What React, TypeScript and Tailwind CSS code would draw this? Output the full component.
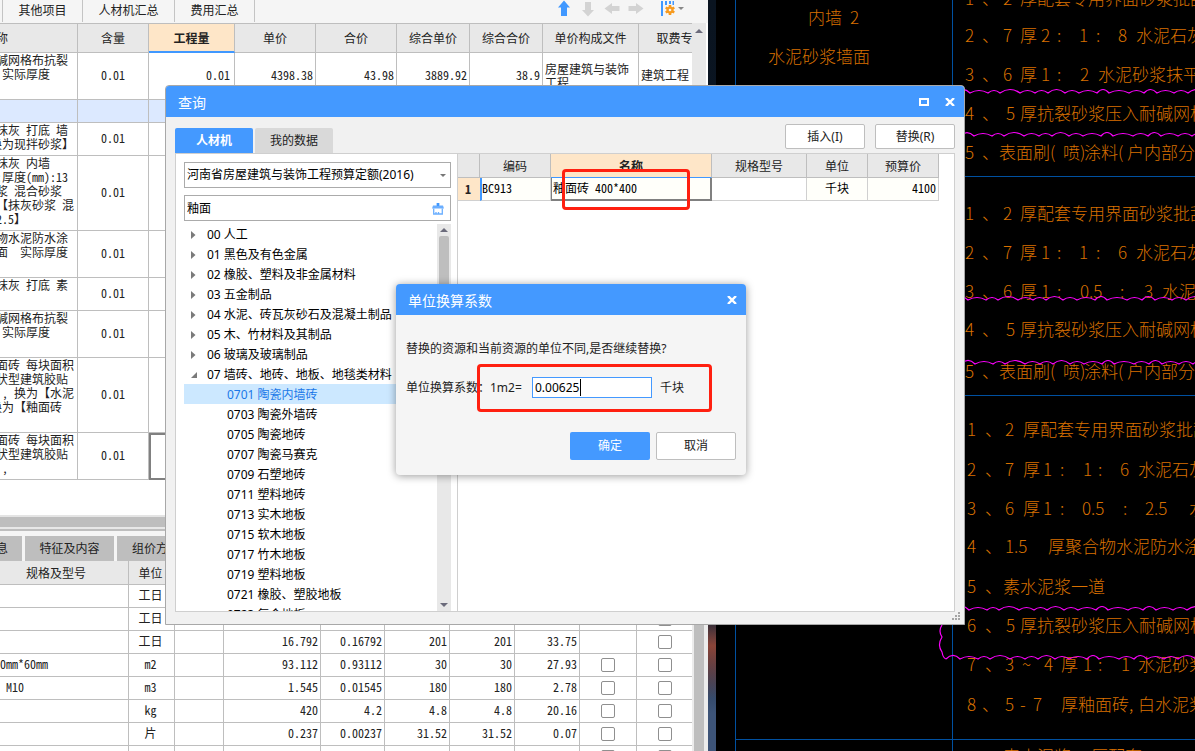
import React from "react";

const UI = "font-['Noto_Sans','Noto_Sans_CJK_SC',sans-serif]";
const GRID = "font-['Noto_Sans_CJK_SC',sans-serif] [font-feature-settings:'hwid']";

/* ---------- toolbar ---------- */

function Arrow({ dir, active, label }: { dir: "up" | "down" | "left" | "right"; active?: boolean; label: string }) {
  const paths = {
    up: "M8 0.5 L14 7.5 H11 V16 H5 V7.5 H2 Z",
    down: "M8 16.5 L14 10 H11 V2 H5 V10 H2 Z",
    left: "M0.5 8.5 L8 3 V6 H15.5 V11 H8 V14 Z",
    right: "M15.5 8.5 L8 3 V6 H0.5 V11 H8 V14 Z",
  };
  return (
    <button type="button" aria-label={label} className="h-[18px] w-4">
      <svg viewBox="0 0 16 18" className="h-[18px] w-4">
        <path d={paths[dir]} fill={active ? "#4098ff" : "#d3d3d3"} />
      </svg>
    </button>
  );
}

function Toolbar() {
  return (
    <div className="flex h-[23px] shrink-0 items-start bg-[#f5f5f5]">
      <nav className="ml-[2px] flex h-[22px] border-l border-[#c4c4c4]">
        <button type="button" className="w-20 border-r border-[#c4c4c4]">其他项目</button>
        <button type="button" className="w-[92px] border-r border-[#c4c4c4]">人材机汇总</button>
        <button type="button" className="w-20 border-r border-[#c4c4c4]">费用汇总</button>
      </nav>
      <div className="mr-6 ml-auto flex items-center gap-2">
        <Arrow dir="up" active label="上移" />
        <Arrow dir="down" label="下移" />
        <Arrow dir="left" label="升级" />
        <Arrow dir="right" label="降级" />
        <button type="button" aria-label="列设置" className="ml-2 h-[18px] w-6">
          <svg viewBox="0 0 24 18" className="h-[18px] w-6">
            <path d="M1 1h2v15H1z" fill="#4098ff" />
            <path d="M5 1h2v4H5zM9 1h2v3H9zM12.500 1h1.500v4h-1.500z" fill="#4098ff" />
            <g stroke="#f79a1e" strokeWidth="2.600">
              <path d="M10 5v10M5.700 7.500l8.600 5M14.300 7.500l-8.600 5" />
            </g>
            <circle cx="10" cy="10" r="3.600" fill="#f79a1e" />
            <circle cx="10" cy="10" r="1.300" fill="#f5f5f5" />
            <path d="M18 7h6l-3 3z" fill="#888" />
          </svg>
        </button>
      </div>
    </div>
  );
}

/* ---------- upper grid ---------- */

type TopRow = { h: string; lines: string[]; content?: string; tint?: boolean; first?: boolean; last?: boolean };

const topRows: TopRow[] = [
  { h: "h-[47px]", lines: [" 碱网格布抗裂", "  实际厚度"], content: "0.01", first: true },
  { h: "h-[23px]", lines: [], tint: true },
  { h: "h-[33px]", lines: [" 抹灰 打底 墙", "换为现拌砂浆】"], content: "0.01" },
  { h: "h-[75px]", lines: [" 抹灰 内墙", " :厚度(mm):13", " 浆 混合砂浆", " 【抹灰砂浆 混", " 2.5】"], content: "0.01" },
  { h: "h-[47px]", lines: [" 物水泥防水涂", " 面  实际厚度"], content: "0.01" },
  { h: "h-[33px]", lines: [" 抹灰 打底 素"], content: "0.01" },
  { h: "h-[47px]", lines: [" 碱网格布抗裂", "  实际厚度"], content: "0.01" },
  { h: "h-[75px]", lines: [" 面砖 每块面积", " 状型建筑胶贴", "  , 换为【水泥", "换为【釉面砖"], content: "0.01" },
  { h: "h-[47px]", lines: [" 面砖 每块面积", " 状型建筑胶贴", "  ,"], content: "0.01", last: true },
];

function ScrollUp() {
  return (
    <svg viewBox="0 0 8 4" className="h-1 w-2" aria-hidden="true">
      <path d="M0 4L4 0l4 4z" fill="#6b6b7b" />
    </svg>
  );
}

function TopGrid() {
  const cell = "border-r border-b border-[#bebebe]";
  const num = `${cell} pr-0.5 pb-0.5 text-right`;
  const head = "border-r border-b border-[#bebebe] bg-[#e8e8e8] font-normal";
  return (
    <div className={`flex shrink-0 bg-white pb-[35px] ${GRID}`}>
      <div className="w-[692px] overflow-hidden border-t border-[#bebebe]">
        <table className="w-[723px] table-fixed border-separate border-spacing-0">
          <colgroup>
            <col className="w-[78px]" />
            <col className="w-[71px]" />
            <col className="w-[86px]" />
            <col className="w-[81px]" />
            <col className="w-[81px]" />
            <col className="w-[73px]" />
            <col className="w-[73px]" />
            <col className="w-24" />
            <col className="w-[84px]" />
          </colgroup>
          <thead>
            <tr className="h-[29px]">
              <th className={`${head} text-left whitespace-pre`}><span className="-ml-2.5 block"> 称</span></th>
              <th className={head}>含量</th>
              <th className="border-r border-b-2 border-r-[#bebebe] border-b-[#4098ff] bg-[#fee6c8] font-bold">工程量</th>
              <th className={head}>单价</th>
              <th className={head}>合价</th>
              <th className={head}>综合单价</th>
              <th className={head}>综合合价</th>
              <th className={head}>单价构成文件</th>
              <th className={head}>取费专业</th>
            </tr>
          </thead>
          <tbody>
            {topRows.map((r, i) => (
              <tr key={i} className={`${r.h} ${r.tint ? "bg-[#dce9ff]" : ""}`}>
                <td className={`${cell} overflow-hidden align-top whitespace-pre`}>
                  {r.lines.map((l, k) => (
                    <span key={k} className="-ml-2.5 block leading-[14px]">{l}</span>
                  ))}
                </td>
                <td className={`${cell} pb-0.5 text-center`}>{r.content}</td>
                <td className={r.last ? "border-2 border-[#808080]" : `${cell} pr-1 pb-0.5 text-right`}>{r.first && "0.01"}</td>
                <td className={num}>{r.first && "4398.38"}</td>
                <td className={num}>{r.first && "43.98"}</td>
                <td className={num}>{r.first && "3889.92"}</td>
                <td className={num}>{r.first && "38.9"}</td>
                <td className={`${cell} px-0.5 leading-[14px]`}>{r.first && "房屋建筑与装饰工程"}</td>
                <td className={`${cell} px-0.5 pb-0.5`}>{r.first && "建筑工程"}</td>
              </tr>
            ))}
          </tbody>
        </table>
      </div>
      <div className="flex w-[14px] justify-center bg-[#e8e8e8] pt-1.5"><ScrollUp /></div>
    </div>
  );
}

/* ---------- lower grid ---------- */

const lowRows: { spec: string; unit: string; v: string[]; a: boolean; b: boolean }[] = [
  { spec: "", unit: "工日", v: ["", "", "", "", ""], a: false, b: true },
  { spec: "", unit: "工日", v: ["", "", "", "", ""], a: false, b: true },
  { spec: "", unit: "工日", v: ["16.792", "0.16792", "201", "201", "33.75"], a: false, b: true },
  { spec: "0mm*60mm", unit: "m2", v: ["93.112", "0.93112", "30", "30", "27.93"], a: true, b: true },
  { spec: " M10", unit: "m3", v: ["1.545", "0.01545", "180", "180", "2.78"], a: true, b: true },
  { spec: "", unit: "kg", v: ["420", "4.2", "4.8", "4.8", "20.16"], a: true, b: true },
  { spec: "", unit: "片", v: ["0.237", "0.00237", "31.52", "31.52", "0.07"], a: true, b: true },
  { spec: "", unit: "", v: ["", "", "", "", ""], a: true, b: true },
];

function Tick({ label }: { label: string }) {
  return (
    <input
      type="checkbox"
      aria-label={label}
      className="mx-auto block h-3.5 w-3.5 appearance-none rounded-xs border border-[#8f8f8f] bg-white"
    />
  );
}

function LowerPanel() {
  const line = "border-r border-b border-[#bebebe]";
  const cell = `${line} pb-0.5`;
  return (
    <div className="shrink-0 bg-white">
      <div className="h-0.5 bg-[#e4e4e4]" />
      <div className="h-2.5 bg-[#bebebe]" />
      <div className="h-0.5 bg-[#e8e8e8]" />
      <div className="h-0.5 bg-[#bebebe]" />
      <div className="flex h-[30px] gap-[3px] bg-[#f5f5f5] pt-[5px]">
        <button type="button" className="w-[22px] bg-[#bebebe] whitespace-nowrap"><span className="-ml-1 block w-2">息</span></button>
        <button type="button" className="w-[89px] bg-[#bebebe]">特征及内容</button>
        <button type="button" className="w-[78px] bg-[#bebebe]">组价方案</button>
      </div>
      <div className={`flex ${GRID}`}>
        <table className="w-[692px] table-fixed border-separate border-spacing-0">
          <colgroup>
            <col className="w-[129px]" />
            <col className="w-[46px]" />
            <col className="w-[49px]" />
            <col className="w-[97px]" />
            <col className="w-16" />
            <col className="w-[65px]" />
            <col className="w-[65px]" />
            <col className="w-[65px]" />
            <col className="w-[57px]" />
            <col />
          </colgroup>
          <thead>
            <tr className="h-6 bg-[#e8e8e8]">
              <th className={`${line} pr-4 font-normal`}>规格及型号</th>
              <th className={`${line} pr-0.5 font-normal`}>单位</th>
              {[0, 1, 2, 3, 4, 5, 6, 7].map((n) => (
                <th key={n} className={line} />
              ))}
            </tr>
          </thead>
          <tbody>
            {lowRows.map((r, i) => (
              <tr key={i} className="h-[23px]">
                <td className={`${cell} whitespace-pre`}>{r.spec}</td>
                <td className={`${cell} pr-0.5 text-center`}>{r.unit}</td>
                <td className={cell} />
                {r.v.map((v, k) => (
                  <td key={k} className={`${cell} pr-0.5 text-right`}>{v}</td>
                ))}
                <td className={line}>{r.a && <Tick label="是否暂估" />}</td>
                <td className="border-b border-[#bebebe]">{r.b && <Tick label="锁定单价" />}</td>
              </tr>
            ))}
          </tbody>
        </table>
        <div className="flex w-4 bg-[#ececec] pl-0.5">
          <div className="w-2.5 bg-[#bebebe]" />
        </div>
      </div>
    </div>
  );
}

/* ---------- CAD drawing ---------- */

type Piece = [number, string];
const cadLines: { y: number; p: Piece[] }[] = [
  { y: 18, p: [[92, "内墙"], [134, "2"]] },
  { y: 57, p: [[52, "水泥砂浆墙面"]] },
  { y: -1, p: [[249, "1"], [266, "、"], [287, "2"], [304, "厚配套专用界面砂浆批刮"]] },
  { y: 36, p: [[249, "2"], [266, "、"], [287, "7"], [304, "厚"], [325, "2"], [341, ":"], [363, "1"], [380, ":"], [402, "8"], [420, "水泥石灰"]] },
  { y: 75, p: [[249, "3"], [266, "、"], [287, "6"], [304, "厚"], [325, "1"], [341, ":"], [364, "2"], [382, "水泥砂浆抹平"]] },
  { y: 114, p: [[249, "4"], [266, "、"], [290, "5"], [304, "厚抗裂砂浆压入耐碱网格"]] },
  { y: 153, p: [[249, "5"], [266, "、"], [283, "表面刷("], [347, "喷)"], [368, "涂料("], [411, "户内部分"]] },
  { y: 214, p: [[249, "1"], [266, "、"], [287, "2"], [304, "厚配套专用界面砂浆批刮"]] },
  { y: 253, p: [[249, "2"], [266, "、"], [287, "7"], [304, "厚"], [325, "1"], [341, ":"], [363, "1"], [380, ":"], [402, "6"], [420, "水泥石灰"]] },
  { y: 292, p: [[249, "3"], [266, "、"], [287, "6"], [304, "厚"], [325, "1"], [341, ":"], [364, "0.5"], [404, ":"], [428, "3"], [446, "水泥石"]] },
  { y: 330, p: [[249, "4"], [266, "、"], [290, "5"], [304, "厚抗裂砂浆压入耐碱网格"]] },
  { y: 372, p: [[249, "5"], [266, "、"], [283, "表面刷("], [347, "喷)"], [368, "涂料("], [411, "户内部分"]] },
  { y: 430, p: [[251, "1"], [269, "、"], [289, "2"], [307, "厚配套专用界面砂浆批刮"]] },
  { y: 470, p: [[251, "2"], [269, "、"], [289, "7"], [307, "厚"], [327, "1"], [344, ":"], [367, "1"], [382, ":"], [404, "6"], [422, "水泥石灰"]] },
  { y: 509, p: [[251, "3"], [269, "、"], [289, "6"], [307, "厚"], [327, "1"], [344, ":"], [366, "0.5"], [407, ":"], [429, "2.5"], [473, "水"]] },
  { y: 547, p: [[251, "4"], [269, "、"], [289, "1.5"], [332, "厚聚合物水泥防水涂"]] },
  { y: 587, p: [[251, "5"], [269, "、"], [287, "素水泥浆一道"]] },
  { y: 626, p: [[251, "6"], [269, "、"], [290, "5"], [304, "厚抗裂砂浆压入耐碱网格"]] },
  { y: 665, p: [[251, "7"], [269, "、"], [289, "3"], [306, "~"], [328, "4"], [345, "厚"], [367, "1"], [382, ":"], [405, "1"], [422, "水泥砂浆"]] },
  { y: 705, p: [[251, "8"], [266, "、"], [289, "5"], [304, "-"], [317, "7"], [345, "厚釉面砖,"], [422, "白水泥浆"]] },
  { y: 757, p: [[287, "素水泥浆"], [375, "厚配套"]] },
];

function wave(x: number, y: number, end: number) {
  const widths = [14, 18, 12, 20, 15, 13, 17];
  let d = `M${x} ${y}`;
  for (let i = 0; x < end; i++) {
    const w = widths[i % widths.length];
    d += ` q${w / 2} ${i % 3 === 0 ? -7 : -5} ${w} 0`;
    x += w;
  }
  return d;
}

function CadView() {
  return (
    <svg className="min-w-0 flex-1 bg-black" role="img" aria-label="做法表">
      <g fill="#d87000" fontSize="17" className="font-['Noto_Sans_CJK_SC',sans-serif] font-light">
        {cadLines.map((l, i) => (
          <text key={i} y={l.y + 6}>
            {l.p.map(([x, t], k) => (
              <tspan key={k} x={x}>{t}</tspan>
            ))}
          </text>
        ))}
      </g>
      <g fill="none" stroke="#0050a0">
        <path d="M19.500 0V751M236.500 0V751" />
        <path d="M236 176.500H1600M236 395.500H1600M19 739.500H1600" />
      </g>
      <g fill="none" stroke="#ff00ff" strokeWidth="1.200">
        <path d={wave(240, 93, 1600)} />
        <path d={wave(244, 136, 1600)} />
        <path d={wave(238, 300, 1600)} />
        <path d={wave(245, 364, 1600)} />
        <path d={wave(239, 610, 1600)} />
        <path d={wave(230, 659, 1600)} />
        <path d="M226 625q-4 6 0 12q-5 8 0 15q1 6 4 7" />
      </g>
    </svg>
  );
}

/* ---------- query dialog ---------- */

const parents = [
  "00 人工",
  "01 黑色及有色金属",
  "02 橡胶、塑料及非金属材料",
  "03 五金制品",
  "04 水泥、砖瓦灰砂石及混凝土制品",
  "05 木、竹材料及其制品",
  "06 玻璃及玻璃制品",
];
const children = [
  "0701 陶瓷内墙砖",
  "0703 陶瓷外墙砖",
  "0705 陶瓷地砖",
  "0707 陶瓷马赛克",
  "0709 石塑地砖",
  "0711 塑料地砖",
  "0713 实木地板",
  "0715 软木地板",
  "0717 竹木地板",
  "0719 塑料地板",
  "0721 橡胶、塑胶地板",
  "0723 复合地板",
];

function CloseIcon() {
  return (
    <svg viewBox="0 0 10 8" className="h-2 w-2.5" aria-hidden="true">
      <path d="M1 0l8 8M9 0l-8 8" stroke="#fff" strokeWidth="2.400" />
    </svg>
  );
}

function Tree() {
  return (
    <div className="mt-[3px] flex min-h-0 flex-1 overflow-hidden">
      <ul className="min-w-0 flex-1 leading-5 whitespace-nowrap text-black">
        {parents.map((t) => (
          <li key={t} className="flex h-5 items-center pt-0.5 pl-[7px]">
            <svg viewBox="0 0 16 8" className="h-2 w-4 shrink-0" aria-hidden="true">
              <path d="M0 0l4.500 4L0 8z" fill="#7a7a7a" />
            </svg>
            {t}
          </li>
        ))}
        <li>
          <div className="flex h-5 items-center pt-0.5 pl-[7px]">
            <svg viewBox="0 0 16 8" className="h-2 w-4 shrink-0" aria-hidden="true">
              <path d="M6 1v6H0z" fill="#7a7a7a" />
            </svg>
            07 墙砖、地砖、地板、地毯类材料
          </div>
          <ul>
            {children.map((t, i) => (
              <li key={t} className={`h-5 pt-px pl-[43px] ${i === 0 ? "bg-[#cce8ff] text-[#1a78e8]" : ""}`}>{t}</li>
            ))}
          </ul>
        </li>
      </ul>
      <div className="flex w-3.5 shrink-0 flex-col items-center bg-[#e8e8e8] pt-1">
        <ScrollUp />
        <div className="mt-1 h-[120px] w-2.5 rounded-xs bg-[#bebebe]" />
        <svg viewBox="0 0 8 4" className="mt-auto mb-1 h-1 w-2" aria-hidden="true">
          <path d="M0 0h8L4 4z" fill="#6b6b7b" />
        </svg>
      </div>
    </div>
  );
}

function ResultTable() {
  const head = "border-r border-b border-[#bebebe] bg-[#e8e8e8] font-normal";
  const cell = "border-r border-b border-[#d0d0d0] pb-0.5";
  return (
    <table className={`w-[481px] table-fixed border-separate border-spacing-0 text-black ${GRID}`}>
      <colgroup>
        <col className="w-[22px]" />
        <col className="w-[71px]" />
        <col className="w-[161px]" />
        <col className="w-[95px]" />
        <col className="w-[61px]" />
        <col />
      </colgroup>
      <thead>
        <tr className="h-6 text-[#222]">
          <th className={head} />
          <th className={head}>编码</th>
          <th className="border-r border-b border-r-[#bebebe] border-b-[#4098ff] bg-[#fee6c8] font-bold">名称</th>
          <th className={head}>规格型号</th>
          <th className={head}>单位</th>
          <th className={head}>预算价</th>
        </tr>
      </thead>
      <tbody>
        <tr className="h-[23px] bg-[#fffffa]">
          <th className="border-b border-[#d0d0d0] bg-[#fee6c8] pr-0.5 text-[#222]">1</th>
          <td className={`${cell} border-l-2 border-l-[#4098ff]`}>BC913</td>
          <td className="border-r-2 border-b-2 border-l border-[#808080] pb-px pl-px">釉面砖 400*400</td>
          <td className={`${cell} bg-white`} />
          <td className={`${cell} text-center`}>千块</td>
          <td className={`${cell} pr-0.5 text-right`}>4100</td>
        </tr>
      </tbody>
    </table>
  );
}

function QueryDialog() {
  const btn = "h-[25px] w-20 rounded-xs border border-[#bebebe] bg-white";
  return (
    <section
      role="dialog"
      aria-label="查询"
      className="absolute top-[85px] left-[165px] flex h-[540px] w-[800px] flex-col overflow-hidden rounded-t-sm border border-[#a8a8a8] bg-[#f1f1f1]"
    >
      <header className="flex h-[31px] shrink-0 items-center bg-[#4499ff] pr-[9px] pl-3 text-sm text-white">
        <h1 className="pt-0.5">查询</h1>
        <button type="button" aria-label="最大化" className="ml-auto">
          <span className="block h-2 w-2.5 border-2 border-white" />
        </button>
        <button type="button" aria-label="关闭" className="ml-4"><CloseIcon /></button>
      </header>
      <div className="flex h-9 shrink-0 items-end gap-0.5 px-[9px]">
        <button type="button" className="h-[25px] w-[78px] rounded-t-xs bg-[#4499ff] font-bold text-white">人材机</button>
        <button type="button" className="h-[25px] w-[78px] rounded-t-xs bg-[#d9d9d9]">我的数据</button>
        <div className="mb-1 ml-auto flex gap-2.5">
          <button type="button" className={btn}>插入(I)</button>
          <button type="button" className={btn}>替换(R)</button>
        </div>
      </div>
      <div className="mx-[9px] mb-3 flex min-h-0 flex-1 border border-[#cfcfcf] bg-white">
        <div className="flex w-[282px] shrink-0 flex-col border-r border-[#cfcfcf] pt-2 pr-1.5 pl-2">
          <div className="flex h-[26px] shrink-0 items-center border border-[#ababab]">
            <select
              aria-label="定额库"
              className="h-6 min-w-0 flex-1 appearance-none bg-transparent pl-0.5 text-black outline-none"
              defaultValue="2016"
            >
              <option value="2016">河南省房屋建筑与装饰工程预算定额(2016)</option>
            </select>
            <svg viewBox="0 0 6 3" className="mr-1 h-[3px] w-1.5" aria-hidden="true">
              <path d="M0 0h6L3 3z" fill="#777" />
            </svg>
          </div>
          <div className="mt-[7px] flex h-[26px] shrink-0 items-center border border-[#ababab]">
            <input aria-label="搜索" className="h-6 min-w-0 flex-1 bg-transparent pl-0.5 text-black outline-none" defaultValue="釉面" />
            <button type="button" aria-label="清除" className="mr-1.5">
              <svg viewBox="0 0 12 13" className="h-[13px] w-3">
                <path d="M4.500 1h3v2.500H11l1 3H0l1-3h3.500z" fill="#6aaeff" />
                <path d="M1.700 6.500v5.500h8.600V6.500M4 12V10M6.500 12V10" fill="none" stroke="#6aaeff" strokeWidth="1.300" />
                <path d="M5 1h2v3H5z" fill="#4098ff" />
              </svg>
            </button>
          </div>
          <Tree />
        </div>
        <div className="min-w-0 flex-1 overflow-hidden">
          <ResultTable />
        </div>
      </div>
      <svg viewBox="0 0 8 8" className="absolute right-1 bottom-1 h-2 w-2" aria-hidden="true">
        <path d="M6 0h2v2H6zM3 3h2v2H3zM6 3h2v2H6zM0 6h2v2H0zM3 6h2v2H3zM6 6h2v2H6z" fill="#a5a5a5" />
      </svg>
    </section>
  );
}

/* ---------- conversion dialog ---------- */

function FactorDialog() {
  return (
    <section
      role="dialog"
      aria-label="单位换算系数"
      className="absolute top-[284px] left-[396px] w-[350px] rounded-sm bg-[#f5f5f5] pb-[15px] shadow-[0_1px_8px_rgba(0,0,0,0.4)]"
    >
      <header className="flex h-[31px] items-center rounded-t-sm bg-[#4499ff] pr-[9px] pl-3 text-sm text-white">
        <h2 className="pt-0.5">单位换算系数</h2>
        <button type="button" aria-label="关闭" className="ml-auto"><CloseIcon /></button>
      </header>
      <p className="mt-6 px-2.5 leading-5">替换的资源和当前资源的单位不同,是否继续替换?</p>
      <div className="mt-[18px] flex h-[21px] items-center px-2.5">
        <label htmlFor="factor" className="w-[126px] whitespace-nowrap">
          <span className="inline-block w-[84px]">单位换算系数：</span>1m2=
        </label>
        <span className="relative">
          <input
            id="factor"
            defaultValue="0.00625"
            className="block h-[21px] w-[120px] border border-[#4499ff] bg-white px-0.5 text-black outline-none"
          />
          <span className="pointer-events-none absolute top-0.5 left-12 h-[17px] w-px bg-black" />
        </span>
        <span className="ml-2">千块</span>
      </div>
      <div className="mt-[34px] flex justify-end gap-1.5 pr-2.5">
        <button type="button" className="h-7 w-20 rounded-xs bg-[#4499ff] text-white">确定</button>
        <button type="button" className="h-7 w-20 rounded-xs border border-[#bebebe] bg-white">取消</button>
      </div>
    </section>
  );
}

export default function App() {
  return (
    <main className={`relative flex h-screen overflow-hidden bg-black text-xs text-[#222] ${UI}`}>
      <div className="flex w-[708px] shrink-0 flex-col overflow-hidden bg-[#f5f5f5]">
        <Toolbar />
        <TopGrid />
        <LowerPanel />
      </div>
      <div className="w-2 shrink-0 bg-linear-to-b from-[#0a1420] from-0% via-[#0c1826] via-80% to-[#3d5478] to-95%">
        <div className="h-full bg-linear-to-b from-transparent from-82% via-[#8a4438] via-86% to-transparent to-93%" />
      </div>
      <CadView />
      <QueryDialog />
      <FactorDialog />
      <div className="pointer-events-none absolute top-[169px] left-[562px] h-[41px] w-32 rounded-sm border-3 border-[#ff2010]" />
      <div className="pointer-events-none absolute top-[364px] left-[477px] h-12 w-[235px] rounded-sm border-3 border-[#ff2010]" />
    </main>
  );
}
